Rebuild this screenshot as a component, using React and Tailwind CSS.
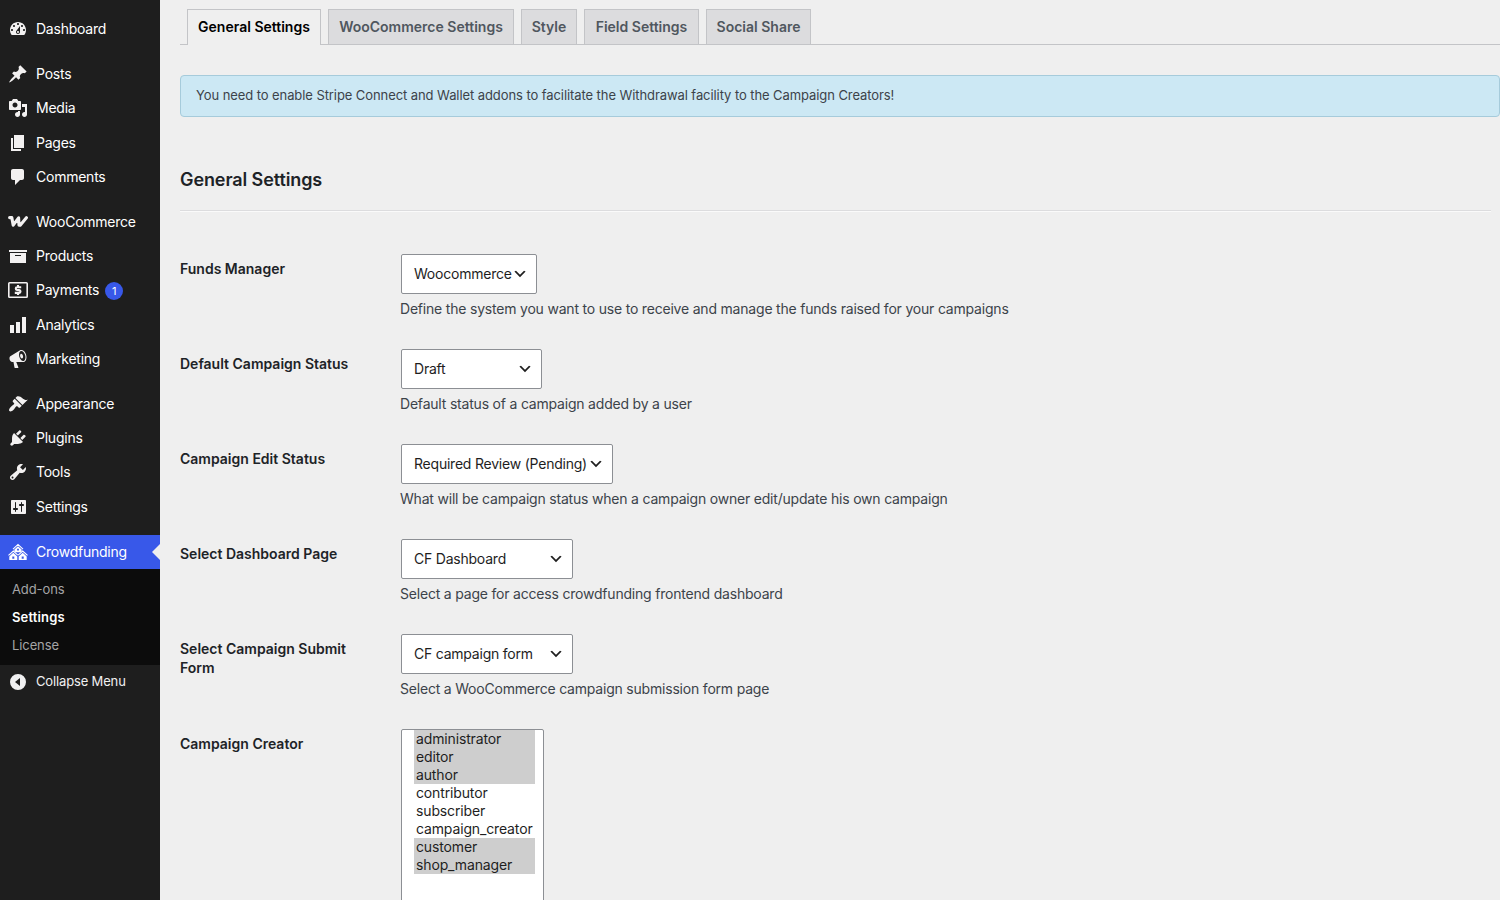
const ICONS = {
  dashboard:
    'M3.76 16h12.48c1.1-1.37 1.76-3.11 1.76-5 0-4.42-3.58-8-8-8s-8 3.58-8 8c0 1.89.66 3.63 1.76 5zM10 4c.55 0 1 .45 1 1s-.45 1-1 1-1-.45-1-1 .45-1 1-1zM6 6c.55 0 1 .45 1 1s-.45 1-1 1-1-.45-1-1 .45-1 1-1zm8 0c.55 0 1 .45 1 1s-.45 1-1 1-1-.45-1-1 .45-1 1-1zm-5.37 5.55L12 7v6c0 1.1-.9 2-2 2s-2-.9-2-2c0-.57.24-1.08.63-1.45zM4 10c.55 0 1 .45 1 1s-.45 1-1 1-1-.45-1-1 .45-1 1-1zm12 0c.55 0 1 .45 1 1s-.45 1-1 1-1-.45-1-1 .45-1 1-1zm-5 3c0-.55-.45-1-1-1s-1 .45-1 1 .45 1 1 1 1-.45 1-1z',
  posts:
    'M10.44 3.02l1.82-1.82 6.36 6.35-1.83 1.82c-1.05-.68-2.48-.57-3.41.36l-.75.75c-.92.93-1.04 2.35-.35 3.41l-1.83 1.82-2.41-2.41-2.8 2.79c-.42.42-3.38 2.71-3.8 2.29s1.86-3.39 2.28-3.81l2.79-2.79L4.1 9.36l1.83-1.82c1.05.69 2.48.57 3.4-.36l.75-.75c.93-.92 1.05-2.35.36-3.41z',
  media:
    'M13 11V4c0-.55-.45-1-1-1h-1.67L9 1H5L3.67 3H2c-.55 0-1 .45-1 1v7c0 .55.45 1 1 1h10c.55 0 1-.45 1-1zM7 4.5c1.38 0 2.5 1.12 2.5 2.5S8.38 9.5 7 9.5 4.5 8.38 4.5 7 5.62 4.5 7 4.5zM14 6h5v10.5c0 1.38-1.12 2.5-2.5 2.5S14 17.88 14 16.5s1.12-2.5 2.5-2.5c.17 0 .34.02.5.05V9h-3V6zm-4 8.05V13h2v3.5c0 1.38-1.12 2.5-2.5 2.5S7 17.88 7 16.5 8.12 14 9.5 14c.17 0 .34.02.5.05z',
  pages: 'M6 15V2h10v13H6zm-1 1h8v2H3V5h2v11z',
  comments: 'M5 2h9c1.1 0 2 .9 2 2v7c0 1.1-.9 2-2 2h-2l-5 5v-5H5c-1.1 0-2-.9-2-2V4c0-1.1.9-2 2-2z',
  products: 'M19 4v2H1V4h18zM2 7h16v10H2V7zm11 3V9H7v1h6z',
  analytics: 'M18 18V2h-4v16h4zm-6 0V7H8v11h4zm-6 0v-8H2v8h4z',
  marketing:
    'M18.15 5.94c.46 1.62.38 3.22-.02 4.48-.42 1.28-1.26 2.18-2.3 2.48-.16.06-.26.06-.4.06-.06.02-.12.02-.18.02-.06.02-.14.02-.22.02h-6.8l2.22 5.5c.02.14-.06.26-.14.34-.08.1-.24.16-.34.16H6.95c-.1 0-.26-.06-.34-.16-.08-.08-.16-.2-.14-.34l-1-5.5H4.25l-.02-.02c-.5.06-1.08-.18-1.54-.62s-.88-1.08-1.06-1.88c-.24-.8-.2-1.56-.02-2.2.18-.62.58-1.08 1.06-1.3l.02-.02 9-5.4c.1-.06.18-.1.24-.16.06-.04.14-.08.24-.12.16-.08.28-.12.5-.18 1.04-.3 2.24.1 3.22.98s1.84 2.24 2.26 3.86zm-2.58 5.98h-.02c.4-.1.74-.34 1.04-.7.58-.7.86-1.76.86-3.04 0-.64-.1-1.3-.28-1.98-.34-1.36-1.02-2.5-1.78-3.24s-1.68-1.1-2.46-.88c-.82.22-1.4.96-1.7 2-.32 1.04-.28 2.36.06 3.72.38 1.36 1 2.5 1.8 3.24.78.74 1.62 1.1 2.48.88zm-2.54-7.08c.22-.04.42-.02.62.04.38.16.76.48 1.02 1s.42 1.2.42 1.78c0 .3-.04.56-.12.8-.18.48-.44.84-.86.94-.34.1-.8-.06-1.14-.4s-.64-.86-.78-1.5c-.18-.62-.12-1.24.02-1.72s.48-.84.82-.94z',
  appearance:
    'M14.48 11.06L7.41 3.99l1.5-1.5c.5-.56 2.3-.47 3.51.32 1.21.8 1.43 1.28 2.91 2.1 1.18.64 2.45 1.26 4.45.85zm-.71.71L6.7 4.7 4.93 6.47c-.39.39-.39 1.02 0 1.41l1.06 1.06c.39.39.39 1.03 0 1.42-.6.6-1.43 1.11-2.21 1.69-.35.26-.7.53-1.01.84C1.43 14.23.4 16.08 1.4 17.07c.99 1 2.84-.03 4.18-1.36.31-.31.58-.66.85-1.02.57-.78 1.08-1.61 1.69-2.21.39-.39 1.02-.39 1.41 0l1.06 1.06c.39.39 1.02.39 1.41 0z',
  plugins:
    'M13.11 4.36L9.87 7.6 8 5.73l3.24-3.24c.35-.34 1.05-.2 1.56.32.52.51.66 1.21.31 1.55zm-8 1.77l.91-1.12 9.01 9.01-1.19.84c-.71.71-2.63 1.16-3.82 1.16H6.14L4.9 17.26c-.59.59-1.54.59-2.12 0-.59-.58-.59-1.53 0-2.12l1.24-1.24v-3.88c0-1.13.4-3.19 1.09-3.89zm7.26 3.97l3.24-3.24c.34-.35 1.04-.21 1.55.31.52.51.66 1.21.31 1.55l-3.24 3.25z',
  tools:
    'M16.68 9.77c-1.34 1.34-3.3 1.67-4.95.99l-5.41 6.52c-.99.99-2.59.99-3.58 0s-.99-2.59 0-3.57l6.52-5.42c-.68-1.65-.35-3.61.99-4.95 1.28-1.28 3.12-1.62 4.72-1.06l-2.89 2.89 2.82 2.82 2.86-2.87c.53 1.58.18 3.39-1.08 4.65zM3.81 16.21c.4.39 1.04.39 1.43 0 .4-.4.4-1.04 0-1.43-.39-.4-1.03-.4-1.43 0-.39.39-.39 1.03 0 1.43z',
  settings:
    'M18 16V4c0-.55-.45-1-1-1H4c-.55 0-1 .45-1 1v12c0 .55.45 1 1 1h13c.55 0 1-.45 1-1zM8 11h1c.55 0 1 .45 1 1s-.45 1-1 1H8v1.5c0 .28-.22.5-.5.5s-.5-.22-.5-.5V13H6c-.55 0-1-.45-1-1s.45-1 1-1h1V5.5c0-.28.22-.5.5-.5s.5.22.5.5V11zm5-2h-1c-.55 0-1-.45-1-1s.45-1 1-1h1V5.5c0-.28.22-.5.5-.5s.5.22.5.5V7h1c.55 0 1 .45 1 1s-.45 1-1 1h-1v5.5c0 .28-.22.5-.5.5s-.5-.22-.5-.5V9z',
  collapse: 'M10 2a8 8 0 1 0 0 16 8 8 0 0 0 0-16zM12 6v8l-5-4 5-4z',
};

function Icon({ name }) {
  const base = 'h-5 w-5 shrink-0';
  if (name === 'woo') {
    return (
      <svg viewBox="0 0 20 20" className={base} fill="none" stroke="currentColor" strokeWidth="3.1" strokeLinejoin="round" strokeLinecap="round">
        <path d="M1.6 5.6h2.2l1.4 7.6 5.4-7.4.4 7.4h1.2l6.2-7.5" />
      </svg>
    );
  }
  if (name === 'payments') {
    return (
      <svg viewBox="0 0 20 20" className={base} fill="none" stroke="currentColor">
        <rect x="0.8" y="2.8" width="18.4" height="14.4" rx="0.8" strokeWidth="1.6" />
        <path d="M13.2 7.2H9c-1.6 0-1.6 2.6 0 2.8l2.2.1c1.7.2 1.7 2.8 0 2.8H6.8M10 5v2M10 13v2" strokeWidth="2.1" />
      </svg>
    );
  }
  if (name === 'crowd') {
    return (
      <svg viewBox="0 0 20 20" className={base} fill="none" stroke="currentColor">
        <path d="M5 7.2l5-4.8 5 4.8M0.5 13.4l4.8-4.4 4.5 4.2M10.2 13.2L14.7 9l4.8 4.4" strokeWidth="1.1" />
        <path fillRule="evenodd" fill="currentColor" stroke="none" d="M10 4.2l3.6 3.4v2l-1.6.6h-4l-1.6-.6v-2zM9.1 6.7v1.8h1.8V6.7zM5.3 10.8l4 3.6v3.6H1.3v-3.6zM4.3 14.6v2.2h2v-2.2zM14.7 10.8l4 3.6v3.6h-8v-3.6zM13.7 14.6v2.2h2v-2.2z" />
      </svg>
    );
  }
  return (
    <svg viewBox="0 0 20 20" className={base} fill="currentColor" fillRule="evenodd">
      <path d={ICONS[name]} />
    </svg>
  );
}

const MENU = [
  [['dashboard', 'Dashboard']],
  [['posts', 'Posts'], ['media', 'Media'], ['pages', 'Pages'], ['comments', 'Comments']],
  [['woo', 'WooCommerce'], ['products', 'Products'], ['payments', 'Payments', 1], ['analytics', 'Analytics'], ['marketing', 'Marketing']],
  [['appearance', 'Appearance'], ['plugins', 'Plugins'], ['tools', 'Tools'], ['settings', 'Settings']],
];

function Sidebar() {
  return (
    <nav className="flex w-40 shrink-0 flex-col bg-[#1e1e1e] pt-3 text-sm tracking-[-0.24px] text-white">
      {MENU.map((group, i) => (
        <ul key={i} className="mb-[11px]">
          {group.map(([icon, label, count]) => (
            <li key={label} className="flex h-[34.2px] items-center gap-2 pl-2">
              <span className="text-[#f3f1f1]"><Icon name={icon} /></span>
              <span>{label}</span>
              {count && (
                <span className="-ml-0.5 mt-0.5 flex size-[18px] items-center justify-center rounded-full bg-[#3858e9] text-[11px]">
                  {count}
                </span>
              )}
            </li>
          ))}
        </ul>
      ))}
      <div className="flex h-[34px] items-center gap-2 bg-[#3858e9] pl-2">
        <Icon name="crowd" />
        <span className="grow">Crowdfunding</span>
        <svg viewBox="0 0 8 16" className="h-4 w-2 text-[#efefef]" fill="currentColor"><path d="M8 0v16L0 8z" /></svg>
      </div>
      <ul className="bg-[#0c0c0c] pt-[6px] pb-[6px] pl-3 text-[13px] leading-7 tracking-[-0.1px] text-[#a5a5a6]">
        <li>Add-ons</li>
        <li className="font-semibold tracking-[0.15px] text-white">Settings</li>
        <li>License</li>
      </ul>
      <div className="flex h-[34px] items-center gap-2 pl-2 text-[13px] tracking-[-0.15px] text-[#f0f0f1]">
        <Icon name="collapse" />
        <span>Collapse Menu</span>
      </div>
    </nav>
  );
}

const TABS = [
  ['General Settings', 'w-[134px]'],
  ['WooCommerce Settings', 'w-[186px]'],
  ['Style', 'w-[56px]'],
  ['Field Settings', 'w-[115px]'],
  ['Social Share', 'w-[105px]'],
];

const FIELDS = [
  ['Funds Manager', 'Woocommerce', 'w-[136px]', 'Define the system you want to use to receive and manage the funds raised for your campaigns'],
  ['Default Campaign Status', 'Draft', 'w-[141px]', 'Default status of a campaign added by a user'],
  ['Campaign Edit Status', 'Required Review (Pending)', 'w-[212px]', 'What will be campaign status when a campaign owner edit/update his own campaign'],
  ['Select Dashboard Page', 'CF Dashboard', 'w-[172px]', 'Select a page for access crowdfunding frontend dashboard'],
  ['Select Campaign Submit Form', 'CF campaign form', 'w-[172px]', 'Select a WooCommerce campaign submission form page'],
];

const ROLES = [
  ['administrator', true],
  ['editor', true],
  ['author', true],
  ['contributor', false],
  ['subscriber', false],
  ['campaign_creator', false],
  ['customer', true],
  ['shop_manager', true],
];

function Label({ children }) {
  return <div className="w-[220px] shrink-0 pt-[5px] pr-10 text-sm leading-[19px] font-semibold text-[#1d2327]">{children}</div>;
}

export default function App() {
  return (
    <div className="flex h-[900px] overflow-hidden bg-[#efefef] font-['Inter',sans-serif]">
      <Sidebar />
      <main className="min-w-0 grow pl-5">
        <div className="flex h-[45px] items-end gap-[7px] border-b border-[#c3c4c7] pl-[7px]">
          {TABS.map(([label, width], i) => (
            <div
              key={label}
              className={`${width} flex shrink-0 items-center justify-center border border-b-0 border-[#c3c4c7] text-sm font-semibold whitespace-nowrap ${
                i === 0 ? '-mb-px h-9 bg-[#efefef] pb-px text-black' : 'h-[35px] bg-[#dcdcde] text-[#50575e]'
              }`}
            >
              {label}
            </div>
          ))}
        </div>
        <div className="mt-[30px] flex h-[42px] items-center rounded border border-[#a6cbdb] bg-[#cce8f4] pl-[15px] text-[13px] tracking-[-0.08px] text-[#3c434a]">
          <span>You need to enable Stripe Connect and Wallet addons to facilitate the Withdrawal facility to the Campaign Creators!</span>
        </div>
        <h2 className="mt-[49px] text-lg leading-7 font-semibold tracking-[-0.1px] text-[#1d2327]">General Settings</h2>
        <hr className="mt-4 mr-[9px] h-0.5 border-t border-b border-t-[#dcdcde] border-b-[#fafafa]" />
        <div className="mt-[42px]">
          {FIELDS.map(([label, value, width, help]) => (
            <div key={label} className="flex h-[95px]">
              <Label>{label}</Label>
              <div>
                <div className={`${width} ml-px flex h-10 items-center justify-between rounded-xs border border-[#8c8f94] bg-white pr-2 pl-3 text-sm tracking-[-0.22px] whitespace-nowrap text-[#1e1e1e]`}>
                  <span>{value}</span>
                  <svg viewBox="0 0 20 20" className="-ml-2 size-4 shrink-0" fill="currentColor"><path d="M5 6l5 5 5-5 2 1-7 7-7-7 2-1z" /></svg>
                </div>
                <p className="mt-[5px] text-sm tracking-[-0.2px] text-[#3c434a]">{help}</p>
              </div>
            </div>
          ))}
          <div className="flex">
            <Label>Campaign Creator</Label>
            <ul className="ml-px h-[182px] w-[143px] rounded-xs border border-[#8c8f94] bg-white pr-2 pl-3 text-sm leading-[18px] tracking-[-0.14px] text-[#1e1e1e]">
              {ROLES.map(([role, selected]) => (
                <li key={role} className={`h-[18px] pl-0.5 ${selected ? 'bg-[#cecece]' : ''}`}>{role}</li>
              ))}
            </ul>
          </div>
        </div>
      </main>
    </div>
  );
}
